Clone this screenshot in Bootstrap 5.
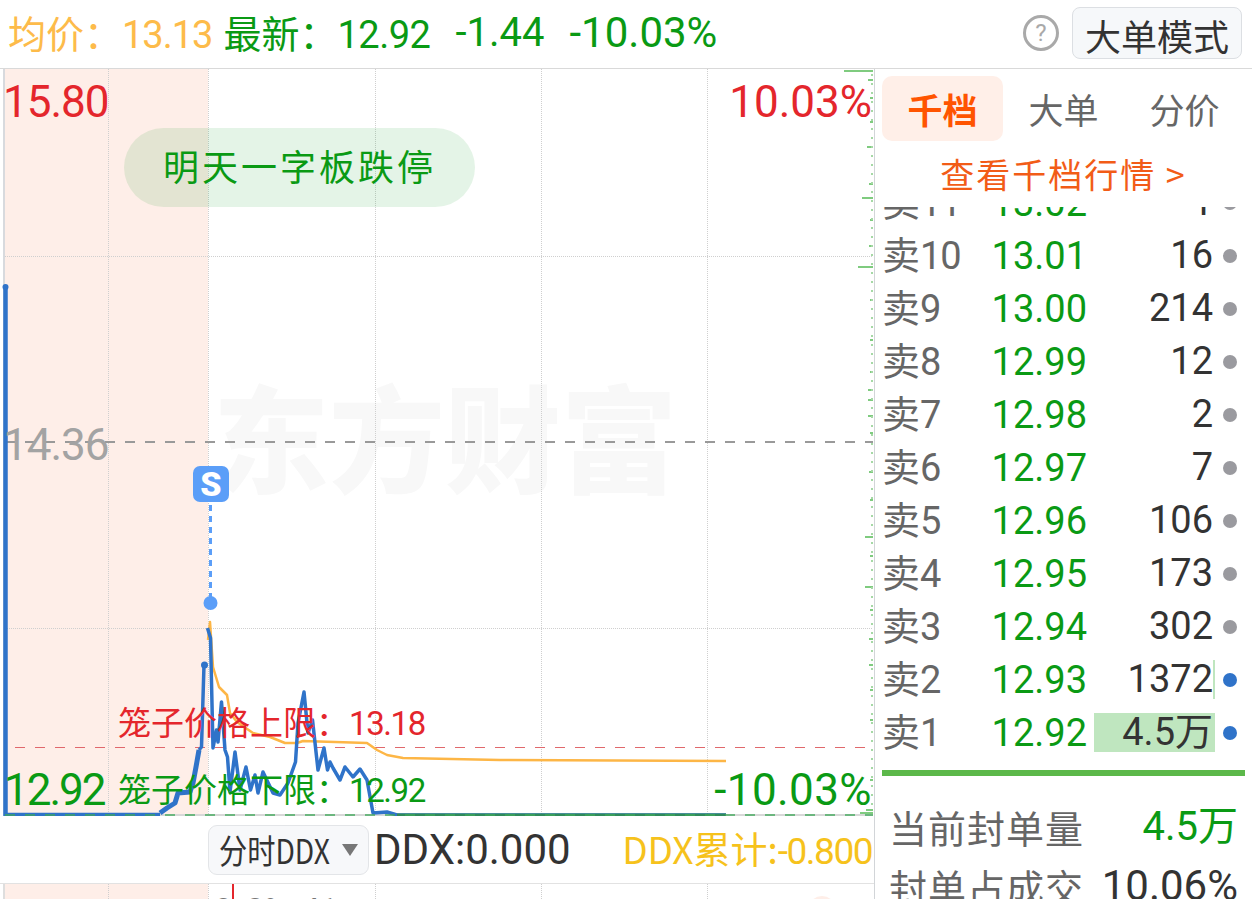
<!DOCTYPE html>
<html lang="zh">
<head>
  <meta charset="UTF-8" />
  <meta name="viewport" content="width=device-width, initial-scale=1.0"/>
  <title>分时</title>
  <link href="https://cdn.jsdelivr.net/npm/bootstrap@5.3.0/dist/css/bootstrap.min.css" rel="stylesheet">
  <style>
    body {
      width: 1252px;
      height: 899px;
      overflow: hidden;
      background: #fff;
      color: #333;
      font-family: "Noto Sans CJK SC", "Roboto", sans-serif;
      font-size: 38px;
      line-height: 1;
    }
    .num { font-family: "Roboto", "Noto Sans CJK SC", sans-serif; letter-spacing: -1px; }
    .num.n-tight { letter-spacing: -.5px; }
    .num.n-40 { font-size: 40px; letter-spacing: 0; }
    .num.n-42 { font-size: 42px; letter-spacing: 0; }
    .c-up { color: #e4262c; }
    .c-down { color: #0a9a14; }
    .c-avg { color: #fdbb4a; }
    .c-ddx { color: #f6c21c; }

    .top-bar { height: 69px; border-bottom: 1px solid #d9d9d9; padding: 0 10px 2px 8px; }
    .top-item { margin-right: 25px; white-space: nowrap; }
    .top-item.c-avg { margin-right: 11px; }
    .help-mark {
      width: 36px; height: 36px; border: 3px solid #a9a9a9; border-radius: 50%;
      color: #a9a9a9; font-size: 24px; font-family: "Roboto", sans-serif;
      margin-right: 13px;
    }
    .mode-btn {
      width: 170px; height: 52px; padding: 0 0 4px; background: #f6f8fa; color: #333;
      border: 1px solid #dcdfe3; border-radius: 8px; font-size: 36px;
    }

    .main-wrap { height: 830px; }
    .left-col { width: 875px; border-right: 1px solid #d2d5d8; flex: none; }
    .right-col { width: 377px; flex: none; }

    .chart-box { position: relative; height: 747px; overflow: hidden; }
    .chart-box svg { position: absolute; left: 0; top: 0; }
    .brand-mark {
      position: absolute; left: 213px; top: 306px; font-size: 116px; font-weight: 900;
      color: #f8f8f8; white-space: nowrap; line-height: 1;
    }
    .axis-label { position: absolute; font-size: 44px; white-space: nowrap; }
    .axis-label.a-wide { letter-spacing: 0; }
    .axis-label.a-wider { letter-spacing: .4px; }
    .axis-label.a-narrow { letter-spacing: -2px; }
    .cage-label { position: absolute; left: 118px; font-size: 33px; white-space: nowrap; }
    .cage-label .num { letter-spacing: -1.4px; }
    .tip-pill {
      position: absolute; left: 124px; top: 59px; width: 351px; height: 79px; padding-bottom: 5px;
      border-radius: 40px; background: rgba(0, 150, 30, .105); font-size: 36px; letter-spacing: 3px;
    }
    .buy-badge {
      position: absolute; left: 193px; top: 397px; width: 36px; height: 36px; border-radius: 7px;
      background: #5b9ef8; color: #fff; font-family: "Roboto", sans-serif; font-weight: 900; font-size: 34px;
    }

    .ddx-bar { height: 68px; border-bottom: 1px solid #e2e2e2; padding-left: 208px; padding-right: 2px; }
    .ddx-btn {
      width: 161px; height: 50px; background: #f7f8fa; border: 1px solid #e3e5e8; border-radius: 9px;
      padding: 0 0 0 10px; color: #333; font-size: 34px; flex: none;
    }
    .ddx-btn-text { display: block; width: 114px; white-space: nowrap; transform: scaleX(.83); transform-origin: left center; text-align: left; }
    .ddx-btn i { display: block; margin-left: 9px; width: 0; height: 0; border: 8px solid transparent; border-top: 12px solid #777; border-bottom: 0; }
    .ddx-text { margin-left: 5px; }
    .ddx-text.num { font-size: 42px; color: #333; letter-spacing: 0; }
    .ddx-sum { font-size: 37px; }
    .ddx-sum .num { letter-spacing: -1.5px; }

    .sub-chart { position: relative; height: 15px; overflow: hidden; }
    .sub-chart svg { position: absolute; left: 0; top: 0; }
    .sub-note { position: absolute; left: 214px; top: 9px; font-size: 34px; color: #777; white-space: pre; word-spacing: 6px; }

    .tab-row { padding: 7px 7px 0 7px; }
    .tab-item {
      width: 121px; height: 65px; border-radius: 10px; color: #666; font-size: 35px;
    }
    .tab-item.on { background: #ffefe8; color: #ff5400; font-weight: 700; }
    .more-link { height: 66px; color: #f25c17; font-size: 34px; letter-spacing: 2px; }

    .book-clip { height: 548px; overflow: hidden; }
    .book-list { margin-top: -31px; }
    .book-row { height: 53px; padding-left: 7px; }
    .book-name { width: 109px; color: #666; font-size: 38px; flex: none; white-space: nowrap; padding-bottom: 3px; }
    .book-price { width: 96px; text-align: right; flex: none; }
    .book-price.num, .book-qty.num { letter-spacing: 0; }
    .book-qty { position: relative; width: 128px; height: 39px; text-align: right; flex: none; padding-right: 2px; line-height: 39px; }
    .qty-bar { position: absolute; right: 0; top: 0; height: 39px; background: #bfe6bf; z-index: 0; }
    .qty-val { position: relative; z-index: 1; }
    .book-dot { width: 14px; height: 14px; border-radius: 50%; margin-left: 8px; background: #9a9a9f; flex: none; }
    .book-dot.hot { background: #2f73c9; }

    .book-rule { height: 6px; background: #5cb84a; margin: 15px 7px 0 7px; }
    .seal-box { margin-top: 21px; }
    .seal-row { padding: 0 14px 0 14px; height: 59px; }
    .seal-name { color: #666; letter-spacing: 1px; }
  </style>
</head>
<body>
  <div class="top-bar d-flex align-items-center">
    <span class="top-item c-avg">均价：<span class="num">13.13</span></span>
    <span class="top-item c-down">最新：<span class="num n-tight">12.92</span></span>
    <span class="top-item c-down num n-40">-1.44</span>
    <span class="top-item c-down num n-42">-10.03%</span>
    <span class="help-mark d-flex align-items-center justify-content-center ms-auto">?</span>
    <button type="button" class="btn mode-btn">大单模式</button>
  </div>

  <div class="main-wrap d-flex">
    <div class="left-col">
      <div class="chart-box">
        <div class="brand-mark">东方财富</div>
        
        <svg width="875" height="747" viewBox="0 69 875 747" fill="none">
          <rect x="5" y="69" width="203" height="747" fill="#feeee8"/>
          <line x1="4" y1="69" x2="4" y2="816" stroke="#d8dade" stroke-width="2"/>
          <g stroke="#cfcfcf" stroke-width="1" stroke-dasharray="1 1">
            <line x1="108.500" y1="69" x2="108.500" y2="816"/>
            <line x1="208.500" y1="69" x2="208.500" y2="816"/>
            <line x1="375.500" y1="69" x2="375.500" y2="816"/>
            <line x1="541.500" y1="69" x2="541.500" y2="816"/>
            <line x1="707.500" y1="69" x2="707.500" y2="816"/>
            <line x1="5" y1="256.500" x2="873" y2="256.500"/>
            <line x1="5" y1="628.500" x2="873" y2="628.500"/>
          </g>
          <line x1="5" y1="442" x2="873" y2="442" stroke="#999" stroke-width="2" stroke-dasharray="10 10"/>
          <line x1="15" y1="747.500" x2="865" y2="747.500" stroke="#e0686c" stroke-width="1" stroke-dasharray="10 10"/>
          <line x1="160" y1="815" x2="873" y2="815" stroke="#d8d8d8" stroke-width="2"/>
          <!-- right edge volume ticks -->
          <path stroke="#7fcb7f" stroke-width="2" d="M844 71H873M862 198H873M858 267H873M867 147H873M868 390H873M865 537H873M865 587H873M869 639H873M869 665H873M860 813H873M868 80H873M870 98H873M870 122H873M869 184H873M870 220H873M869 246H873M870 300H873M870 340H873M870 372H873M868 400H873M868 416H873M870 433H873M869 472H873M870 500H873M870 556H873M870 610H873M870 690H873M870 720H873M870 780H873M866 810H873"/>
          <path stroke="#a5d8a5" stroke-width="2" stroke-dasharray="2 7" d="M872 74V812"/>
          <polyline stroke="#fdb646" stroke-width="2.500" stroke-linejoin="round" points="208,640 210,622 213,667 219,687 227,695 230,713 237,722 253,733 270,737 285,743 297,743 303,741 367,743 377,750 387,755 403,758 500,760 726,761"/>
          <polyline stroke="#2f73c9" stroke-width="4.500" stroke-linejoin="round" points="5.500,287 5.500,815 160,815"/>
          <polyline stroke="#2f73c9" stroke-width="5" stroke-linejoin="round" points="160,813 167,808 175,803 178,793 190,792 193,783 196,767 199,750"/>
          <polyline stroke="#2f73c9" stroke-width="3.500" stroke-linejoin="round" points="199,750 201.500,747 204,665"/>
          <polyline stroke="#2f73c9" stroke-width="3.500" stroke-linejoin="round" points="207.500,628 210.500,638 213,748 216.500,730 218,742 221.500,702 225,750 227.500,757 230,792 235,752 240,790 246,767 250.500,790 255,775 258,793 263,772 273,793 280,795 288,783 295.500,762 298,723 304,692 308,733 312.500,720 318,770 324,748 327.500,770 330,762 333,768 340,780 345,767 353,777 360,769 367,780 373,813 387,812 397,815 726,815"/>
          <circle cx="5.500" cy="287" r="3" fill="#2f73c9"/>
          <circle cx="204.500" cy="665" r="3.500" fill="#2f73c9"/>
          <line x1="397" y1="815" x2="726" y2="815" stroke="#2f8a5a" stroke-width="3"/>
          <line x1="5" y1="815" x2="873" y2="815" stroke="#3fa85a" stroke-width="2" stroke-dasharray="10 10" opacity=".7"/>
          <line x1="210.500" y1="505" x2="210.500" y2="600" stroke="#5b9ef8" stroke-width="3" stroke-dasharray="6 5"/>
          <circle cx="210.500" cy="603" r="7" fill="#5b9ef8"/>
        </svg>
        <span class="axis-label num c-up" style="left:3px;top:11px">15.80</span>
        <span class="axis-label num a-wide c-up" style="right:2px;top:11px">10.03%</span>
        <span class="axis-label num" style="left:3px;top:354px;color:#a3a3a3">14.36</span>
        <span class="axis-label num a-narrow c-down" style="left:4px;top:699px">12.92</span>
        <span class="axis-label num a-wider c-down" style="right:2px;top:699px">-10.03%</span>
        <div class="tip-pill c-down d-flex align-items-center justify-content-center">明天一字板跌停</div>
        <div class="buy-badge d-flex align-items-center justify-content-center">S</div>
        <span class="cage-label c-up" style="top:636px">笼子价格上限：<span class="num">13.18</span></span>
        <span class="cage-label c-down" style="top:703px">笼子价格下限：<span class="num">12.92</span></span>
      </div>

      <div class="ddx-bar d-flex align-items-center">
        <button type="button" class="btn ddx-btn d-flex align-items-center"><span class="ddx-btn-text">分时DDX</span><i></i></button>
        <span class="ddx-text num">DDX:0.000</span>
        <span class="ddx-sum c-ddx ms-auto">DDX累计:<span class="num">-0.800</span></span>
      </div>

      <div class="sub-chart">
        <svg width="875" height="15" viewBox="0 884 875 15" fill="none">
          <rect x="5" y="884" width="203" height="15" fill="#feeee8"/>
          <line x1="4" y1="884" x2="4" y2="899" stroke="#dedede" stroke-width="2"/>
          <g stroke="#cfcfcf" stroke-dasharray="1 1">
            <line x1="108.500" y1="884" x2="108.500" y2="899"/>
            <line x1="208.500" y1="884" x2="208.500" y2="899"/>
            <line x1="375.500" y1="884" x2="375.500" y2="899"/>
            <line x1="541.500" y1="884" x2="541.500" y2="899"/>
            <line x1="707.500" y1="884" x2="707.500" y2="899"/>
          </g>
          <line x1="233" y1="884" x2="233" y2="899" stroke="#e4262c" stroke-width="2"/>
          <circle cx="822" cy="910" r="14" fill="#feeee8"/>
        </svg>
        <span class="sub-note num">9 8% 41</span>
      </div>
    </div>

    <div class="right-col">
      <div class="tab-row d-flex">
        <div class="tab-item on d-flex align-items-center justify-content-center">千档</div>
        <div class="tab-item d-flex align-items-center justify-content-center">大单</div>
        <div class="tab-item d-flex align-items-center justify-content-center">分价</div>
      </div>
      <div class="more-link d-flex align-items-center justify-content-center">查看千档行情 &gt;</div>
      <div class="book-clip">
        <div class="book-list">
          <div class="book-row d-flex align-items-center"><span class="book-name">卖<span class="num">11</span></span><span class="book-price num c-down">13.02</span><span class="book-qty num"><span class="qty-val">1</span></span><span class="book-dot"></span></div>
          <div class="book-row d-flex align-items-center"><span class="book-name">卖<span class="num">10</span></span><span class="book-price num c-down">13.01</span><span class="book-qty num"><span class="qty-val">16</span></span><span class="book-dot"></span></div>
          <div class="book-row d-flex align-items-center"><span class="book-name">卖<span class="num">9</span></span><span class="book-price num c-down">13.00</span><span class="book-qty num"><span class="qty-val">214</span></span><span class="book-dot"></span></div>
          <div class="book-row d-flex align-items-center"><span class="book-name">卖<span class="num">8</span></span><span class="book-price num c-down">12.99</span><span class="book-qty num"><span class="qty-val">12</span></span><span class="book-dot"></span></div>
          <div class="book-row d-flex align-items-center"><span class="book-name">卖<span class="num">7</span></span><span class="book-price num c-down">12.98</span><span class="book-qty num"><span class="qty-val">2</span></span><span class="book-dot"></span></div>
          <div class="book-row d-flex align-items-center"><span class="book-name">卖<span class="num">6</span></span><span class="book-price num c-down">12.97</span><span class="book-qty num"><span class="qty-val">7</span></span><span class="book-dot"></span></div>
          <div class="book-row d-flex align-items-center"><span class="book-name">卖<span class="num">5</span></span><span class="book-price num c-down">12.96</span><span class="book-qty num"><span class="qty-val">106</span></span><span class="book-dot"></span></div>
          <div class="book-row d-flex align-items-center"><span class="book-name">卖<span class="num">4</span></span><span class="book-price num c-down">12.95</span><span class="book-qty num"><span class="qty-val">173</span></span><span class="book-dot"></span></div>
          <div class="book-row d-flex align-items-center"><span class="book-name">卖<span class="num">3</span></span><span class="book-price num c-down">12.94</span><span class="book-qty num"><span class="qty-val">302</span></span><span class="book-dot"></span></div>
          <div class="book-row d-flex align-items-center"><span class="book-name">卖<span class="num">2</span></span><span class="book-price num c-down">12.93</span><span class="book-qty num"><span class="qty-bar" style="width:2px"></span><span class="qty-val">1372</span></span><span class="book-dot hot"></span></div>
          <div class="book-row d-flex align-items-center"><span class="book-name">卖<span class="num">1</span></span><span class="book-price num c-down">12.92</span><span class="book-qty num"><span class="qty-bar" style="width:121px"></span><span class="qty-val">4.5万</span></span><span class="book-dot hot"></span></div>
        </div>
      </div>
      <div class="book-rule"></div>
      <div class="seal-box">
        <div class="seal-row d-flex align-items-center justify-content-between"><span class="seal-name">当前封单量</span><span class="num n-40 c-down">4.5万</span></div>
        <div class="seal-row d-flex align-items-center justify-content-between"><span class="seal-name">封单占成交</span><span class="num n-42">10.06%</span></div>
      </div>
    </div>
  </div>

  <script src="https://cdn.jsdelivr.net/npm/bootstrap@5.3.0/dist/js/bootstrap.bundle.min.js"></script>
</body>
</html>
